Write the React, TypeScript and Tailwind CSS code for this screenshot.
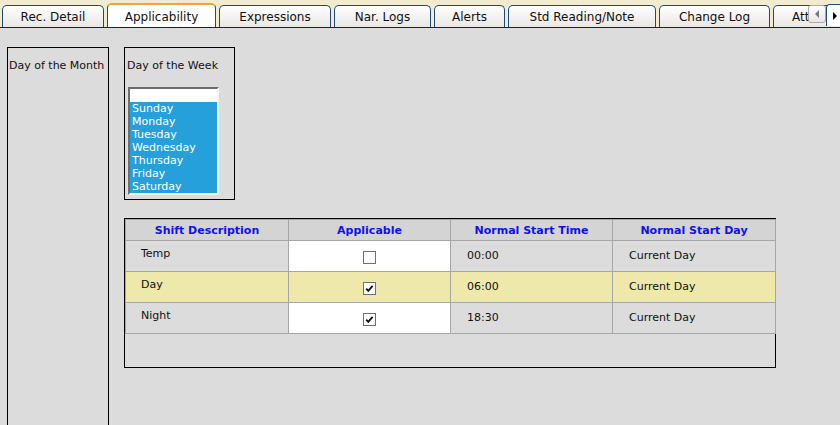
import React from 'react';

const tabs = [
  { label: 'Rec. Detail', w: 'w-[102px]' },
  { label: 'Applicability', w: 'w-[109px]', active: true },
  { label: 'Expressions', w: 'w-[112px]' },
  { label: 'Nar. Logs', w: 'w-[97px]' },
  { label: 'Alerts', w: 'w-[71px]' },
  { label: 'Std Reading/Note', w: 'w-[148px]' },
  { label: 'Change Log', w: 'w-[111px]' },
  { label: 'Attachments', w: 'w-[121px]', left: true },
];

const days = ['Sunday', 'Monday', 'Tuesday', 'Wednesday', 'Thursday', 'Friday', 'Saturday'];

const shifts = [
  { name: 'Temp', checked: false, time: '00:00', day: 'Current Day' },
  { name: 'Day', checked: true, time: '06:00', day: 'Current Day', highlight: true },
  { name: 'Night', checked: true, time: '18:30', day: 'Current Day' },
];

const Checkbox: React.FC<{ checked: boolean }> = ({ checked }) => (
  <span className="inline-flex w-[13px] h-[13px] border border-[#707070] bg-white items-center justify-center align-middle">
    {checked && (
      <svg width="11" height="11" viewBox="0 0 11 11">
        <path d="M2.2 5.6 L4.3 7.8 L8.6 2.8" fill="none" stroke="#111" strokeWidth="1.8" />
      </svg>
    )}
  </span>
);

const App: React.FC = () => {
  return (
    <div className="w-[840px] h-[425px] bg-[#dcdcdc] font-['DejaVu_Sans',sans-serif] text-[#111] overflow-hidden relative">
      {/* tab strip */}
      <div className="relative h-[28px] bg-[#f1ecd0] border-b border-[#10243f] overflow-hidden">
        <div className="flex items-end h-full gap-[3px] pl-[2px]">
          {tabs.map((t) =>
            t.active ? (
              <div
                key={t.label}
                className={`${t.w} shrink-0 h-[25px] -mb-px bg-white border-x border-[#1e4a7a] border-t-2 border-t-[#f0a23a] rounded-t-[5px] flex items-center justify-center text-[12px] relative z-10`}
              >
                {t.label}
              </div>
            ) : (
              <div
                key={t.label}
                className={`${t.w} shrink-0 h-[22px] bg-gradient-to-b from-white to-[#e9e7e3] border border-b-0 border-[#1e4a7a] rounded-t-[5px] flex items-center text-[12px] whitespace-nowrap overflow-hidden ${
                  t.left ? 'justify-start pl-[18px]' : 'justify-center'
                }`}
              >
                {t.label}
              </div>
            )
          )}
        </div>
        <div className="absolute right-0 top-[5px] flex z-20">
          <div className="w-[18px] h-[18px] rounded-[3px] border border-[#a9a9a9] bg-gradient-to-b from-white to-[#e6e6e6] flex items-center justify-center">
            <svg width="6" height="8" viewBox="0 0 6 8">
              <path d="M5 0 L1 4 L5 8 Z" fill="#7a7a7a" />
            </svg>
          </div>
          <div className="w-[14px] h-[22px] -mt-px rounded-tl-[4px] border-l border-t border-[#1e4a7a] bg-white flex items-center justify-center pl-[2px]">
            <svg width="6" height="8" viewBox="0 0 6 8">
              <path d="M1 0 L5 4 L1 8 Z" fill="#000" />
            </svg>
          </div>
        </div>
      </div>

      {/* body */}
      <div className="flex pl-[7px] pt-[19px]">
        <div className="w-[102px] h-[400px] border border-black pl-[1px] pt-[11px] text-[11px] leading-[13px] shrink-0">
          Day of the Month
        </div>

        <div className="ml-[15px] flex flex-col">
          <div className="w-[111px] h-[153px] border border-black px-[2px] pt-[11px] text-[11px] leading-[13px]">
            <div>Day of the Week</div>
            <div className="mt-[15px] ml-[1px] w-[91px] h-[108px] border-2 border-t-[#6d6d6d] border-l-[#6d6d6d] border-b-[#f2f2f2] border-r-[#f2f2f2] bg-white">
              <div className="h-[13px] bg-white" />
              {days.map((d) => (
                <div key={d} className="h-[13px] bg-[#26a0da] text-white pl-[2px] leading-[13px]">
                  {d}
                </div>
              ))}
            </div>
          </div>

          <div className="mt-[18px] w-[652px] h-[150px] border border-black">
            <table className="table-fixed border-collapse text-[11px] w-[650px]">
              <colgroup>
                <col className="w-[163px]" />
                <col className="w-[162px]" />
                <col className="w-[162px]" />
                <col className="w-[163px]" />
              </colgroup>
              <thead>
                <tr className="h-[21px] bg-[#d4d4d4]">
                  {['Shift Description', 'Applicable', 'Normal Start Time', 'Normal Start Day'].map((h) => (
                    <th key={h} className="border border-[#a6a6a6] text-[#1010f0] font-bold text-center p-0 pt-[3px]">
                      {h}
                    </th>
                  ))}
                </tr>
              </thead>
              <tbody>
                {shifts.map((s) => (
                  <tr key={s.name} className={`h-[31px] ${s.highlight ? 'bg-[#eee8aa]' : ''}`}>
                    <td className="border border-[#a6a6a6] pl-[15px] pb-[3px] align-middle">{s.name}</td>
                    <td className={`border border-[#a6a6a6] text-center pt-[3px] align-middle ${s.highlight ? '' : 'bg-white'}`}>
                      <Checkbox checked={s.checked} />
                    </td>
                    <td className="border border-[#a6a6a6] pl-[16px] align-middle">{s.time}</td>
                    <td className="border border-[#a6a6a6] pl-[16px] align-middle">{s.day}</td>
                  </tr>
                ))}
              </tbody>
            </table>
          </div>
        </div>
      </div>
    </div>
  );
};

export default App;
